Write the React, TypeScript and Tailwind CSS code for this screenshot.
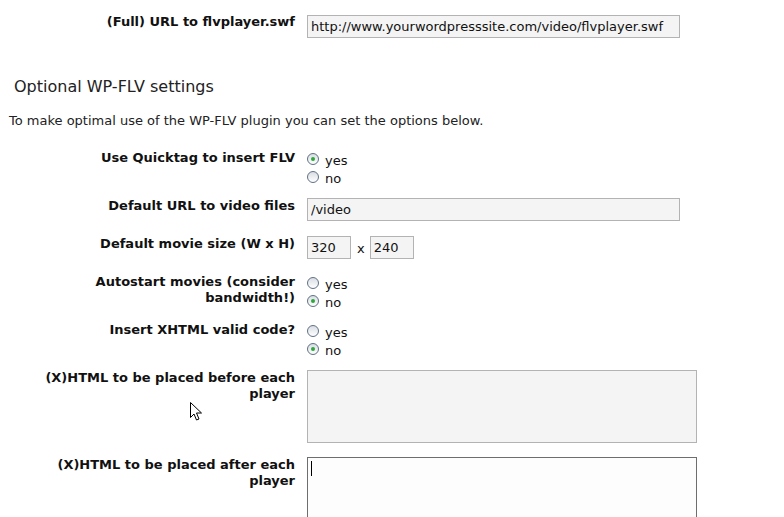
import type { ReactNode } from 'react'

const FONT = "font-['DejaVu_Sans','Verdana',sans-serif]"

function Row({ label, h, children }: { label: ReactNode; h: string; children: ReactNode }) {
  return (
    <div className={`flex ${h}`}>
      <div className="w-[295px] shrink-0 text-right font-bold leading-[16px] text-[#111]">{label}</div>
      <div className="ml-[12px]">{children}</div>
    </div>
  )
}

function Radio({ checked, text }: { checked?: boolean; text: string }) {
  return (
    <div className="flex items-start h-[18px]">
      <span className="mt-[3px] w-[12px] h-[12px] rounded-full border border-[#5f7186] bg-gradient-to-b from-[#d9dde3] to-white flex items-center justify-center">
        {checked && <span className="w-[4px] h-[4px] rounded-full bg-[#2ea83a]" />}
      </span>
      <span className="ml-[6px] leading-[18px] mt-[2px]">{text}</span>
    </div>
  )
}

function TextInput({ value, w }: { value: string; w: string }) {
  return (
    <input
      readOnly
      value={value}
      className={`${w} h-[23px] border border-[#b3b3b3] bg-[#f4f4f4] px-[3px] text-[13px] text-[#111] outline-none ${FONT}`}
    />
  )
}

export default function App() {
  return (
    <div className={`relative w-[784px] h-[517px] overflow-hidden bg-white text-[13px] text-[#111] ${FONT}`}>
      <div className="pt-[14px]">
        <Row label="(Full) URL to flvplayer.swf" h="h-[63px]">
          <div className="pt-[1px]">
            <TextInput w="w-[373px]" value="http://www.yourwordpresssite.com/video/flvplayer.swf" />
          </div>
        </Row>

        <h2 className="ml-[14px] text-[16px] leading-[20px] font-normal text-[#222]">Optional WP-FLV settings</h2>
        <p className="ml-[9px] mt-[16px] text-[13px] leading-[16px] text-[#222]">
          To make optimal use of the WP-FLV plugin you can set the options below.
        </p>

        <div className="mt-[21px]">
          <Row label="Use Quicktag to insert FLV" h="h-[48px]">
            <Radio checked text="yes" />
            <Radio text="no" />
          </Row>
          <Row label="Default URL to video files" h="h-[38px]">
            <TextInput w="w-[373px]" value="/video" />
          </Row>
          <Row label="Default movie size (W x H)" h="h-[38px]">
            <div className="flex items-center">
              <TextInput w="w-[44px]" value="320" />
              <span className="ml-[6px] mr-[5px] mt-[3px]">x</span>
              <TextInput w="w-[44px]" value="240" />
            </div>
          </Row>
          <Row label={<>Autostart movies (consider<br />bandwidth!)</>} h="h-[48px]">
            <Radio text="yes" />
            <Radio checked text="no" />
          </Row>
          <Row label="Insert XHTML valid code?" h="h-[48px]">
            <Radio text="yes" />
            <Radio checked text="no" />
          </Row>
          <Row label={<>(X)HTML to be placed before each<br />player</>} h="h-[87px]">
            <textarea readOnly className="block w-[390px] h-[73px] border border-[#b3b3b3] bg-[#f4f4f4] resize-none outline-none" />
          </Row>
          <Row label={<>(X)HTML to be placed after each<br />player</>} h="h-[87px]">
            <div className="relative">
              <textarea readOnly className="block w-[390px] h-[73px] border border-[#6e6e6e] bg-[#fdfdfd] resize-none outline-none" />
              <span className="absolute left-[4px] top-[4px] w-[1px] h-[15px] bg-black" />
            </div>
          </Row>
        </div>
      </div>

      <svg className="absolute left-[190px] top-[402px]" width="13" height="21" viewBox="0 0 13 21">
        <path d="M0.5 0.5 L0.5 15.5 L4 12 L6.5 18 L9 17 L6.5 11 L11.5 11 Z" fill="white" stroke="black" strokeWidth="1" />
      </svg>
    </div>
  )
}
